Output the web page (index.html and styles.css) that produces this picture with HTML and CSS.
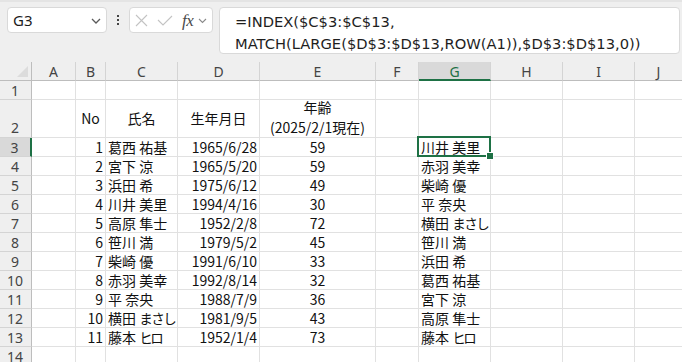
FILE: index.html
```html
<!DOCTYPE html>
<html lang="ja">
<head>
<meta charset="utf-8">
<link rel="stylesheet" href="styles.css">
</head>
<body>
<div class="app">
  <div class="fbar">
    <div class="namebox">
      <span class="nb-text">G3</span>
      <svg class="nb-chev" width="10" height="6" viewBox="0 0 10 6"><path d="M1 1 L5 5 L9 1" fill="none" stroke="#5a5a5a" stroke-width="1.3"/></svg>
    </div>
    <div class="dots"><i></i><i></i><i></i></div>
    <div class="fxbox">
      <svg class="ic" width="13" height="13" viewBox="0 0 13 13"><path d="M1 1 L12 12 M12 1 L1 12" stroke="#c3c3c3" stroke-width="1.1" fill="none"/></svg>
      <svg class="ic ic-check" width="16" height="11" viewBox="0 0 16 11"><path d="M1 5 L6 10 L15 1" stroke="#c3c3c3" stroke-width="1.1" fill="none"/></svg>
      <span class="fx">fx</span>
      <svg class="fx-chev" width="9" height="6" viewBox="0 0 9 6"><path d="M1 1 L4.5 4.5 L8 1" fill="none" stroke="#8a8a8a" stroke-width="1.1"/></svg>
    </div>
    <div class="formula">=INDEX($C$3:$C$13,<br>MATCH(LARGE($D$3:$D$13,ROW(A1)),$D$3:$D$13,0))</div>
  </div>

  <div class="sheet">
    <!-- header row -->
    <div class="corner"><span class="tri"></span></div>
    <div class="ch">A</div><div class="ch">B</div><div class="ch">C</div><div class="ch">D</div><div class="ch">E</div><div class="ch">F</div><div class="ch ch-sel">G</div><div class="ch">H</div><div class="ch">I</div><div class="ch">J</div>

    <!-- row 1 -->
    <div class="rh">1</div>
    <div class="c"></div><div class="c"></div><div class="c"></div><div class="c"></div><div class="c"></div><div class="c"></div><div class="c"></div><div class="c"></div><div class="c"></div><div class="c"></div>

    <!-- row 2 -->
    <div class="rh rh-tall">2</div>
    <div class="c"></div><div class="c ctr mid">No</div><div class="c ctr mid">氏名</div><div class="c ctr mid">生年月日</div><div class="c ctr two">年齢<br>(2025/2/1現在)</div><div class="c"></div><div class="c"></div><div class="c"></div><div class="c"></div><div class="c"></div>

    <!-- row 3 -->
    <div class="rh rh-sel">3</div>
    <div class="c"></div><div class="c r">1</div><div class="c">葛西 祐基</div><div class="c r">1965/6/28</div><div class="c ctr">59</div><div class="c"></div><div class="c sel">川井 美里</div><div class="c"></div><div class="c"></div><div class="c"></div>

    <div class="rh">4</div>
    <div class="c"></div><div class="c r">2</div><div class="c">宮下 涼</div><div class="c r">1965/5/20</div><div class="c ctr">59</div><div class="c"></div><div class="c">赤羽 美幸</div><div class="c"></div><div class="c"></div><div class="c"></div>

    <div class="rh">5</div>
    <div class="c"></div><div class="c r">3</div><div class="c">浜田 希</div><div class="c r">1975/6/12</div><div class="c ctr">49</div><div class="c"></div><div class="c">柴崎 優</div><div class="c"></div><div class="c"></div><div class="c"></div>

    <div class="rh">6</div>
    <div class="c"></div><div class="c r">4</div><div class="c">川井 美里</div><div class="c r">1994/4/16</div><div class="c ctr">30</div><div class="c"></div><div class="c">平 奈央</div><div class="c"></div><div class="c"></div><div class="c"></div>

    <div class="rh">7</div>
    <div class="c"></div><div class="c r">5</div><div class="c">高原 隼士</div><div class="c r">1952/2/8</div><div class="c ctr">72</div><div class="c"></div><div class="c"><span>横田 <span class="kana">まさし</span></span></div><div class="c"></div><div class="c"></div><div class="c"></div>

    <div class="rh">8</div>
    <div class="c"></div><div class="c r">6</div><div class="c">笹川 満</div><div class="c r">1979/5/2</div><div class="c ctr">45</div><div class="c"></div><div class="c">笹川 満</div><div class="c"></div><div class="c"></div><div class="c"></div>

    <div class="rh">9</div>
    <div class="c"></div><div class="c r">7</div><div class="c">柴崎 優</div><div class="c r">1991/6/10</div><div class="c ctr">33</div><div class="c"></div><div class="c">浜田 希</div><div class="c"></div><div class="c"></div><div class="c"></div>

    <div class="rh">10</div>
    <div class="c"></div><div class="c r">8</div><div class="c">赤羽 美幸</div><div class="c r">1992/8/14</div><div class="c ctr">32</div><div class="c"></div><div class="c">葛西 祐基</div><div class="c"></div><div class="c"></div><div class="c"></div>

    <div class="rh">11</div>
    <div class="c"></div><div class="c r">9</div><div class="c">平 奈央</div><div class="c r">1988/7/9</div><div class="c ctr">36</div><div class="c"></div><div class="c">宮下 涼</div><div class="c"></div><div class="c"></div><div class="c"></div>

    <div class="rh">12</div>
    <div class="c"></div><div class="c r">10</div><div class="c"><span>横田 <span class="kana">まさし</span></span></div><div class="c r">1981/9/5</div><div class="c ctr">43</div><div class="c"></div><div class="c">高原 隼士</div><div class="c"></div><div class="c"></div><div class="c"></div>

    <div class="rh">13</div>
    <div class="c"></div><div class="c r">11</div><div class="c"><span>藤本 <span class="kana kana-n">ヒロ</span></span></div><div class="c r">1952/1/4</div><div class="c ctr">73</div><div class="c"></div><div class="c"><span>藤本 <span class="kana kana-n">ヒロ</span></span></div><div class="c"></div><div class="c"></div><div class="c"></div>

    <div class="rh">14</div>
    <div class="c"></div><div class="c"></div><div class="c"></div><div class="c"></div><div class="c"></div><div class="c"></div><div class="c"></div><div class="c"></div><div class="c"></div><div class="c"></div>
  </div>
</div>
</body>
</html>
```

FILE: styles.css
```css
* { box-sizing: border-box; }
html, body { margin: 0; padding: 0; }
body {
  width: 682px;
  height: 362px;
  overflow: hidden;
  background: #efefef;
  font-family: "Noto Sans CJK JP", sans-serif;
}
.app {
  border-top: 2px solid #e4e4e4;
}
.fbar {
  display: flex;
  align-items: flex-start;
  height: 60px;
  padding: 5px 0 0 7px;
}
.namebox {
  width: 100px;
  height: 26px;
  background: #fff;
  border: 1px solid #d9d9d9;
  border-radius: 4px;
  display: flex;
  align-items: center;
  justify-content: space-between;
  padding: 0 5px 0 5px;
}
.nb-text {
  font-family: "Noto Sans", sans-serif;
  font-size: 15px;
  color: #1c1c1c;
  line-height: 1;
}
.nb-chev { margin-top: 1px; }
.dots {
  width: 22px;
  height: 26px;
  display: flex;
  flex-direction: column;
  align-items: center;
  justify-content: center;
  gap: 2px;
}
.dots i {
  display: block;
  width: 2px;
  height: 2px;
  background: #444;
}
.fxbox {
  width: 84px;
  height: 26px;
  background: #fff;
  border: 1px solid #d9d9d9;
  border-radius: 4px;
  display: flex;
  align-items: center;
  padding-left: 5px;
}
.ic { flex: none; }
.ic-check { margin-left: 9px; }
.fx {
  margin-left: 9px;
  font-family: "Liberation Serif", serif;
  font-style: italic;
  font-size: 17px;
  color: #4a4a4a;
  line-height: 1;
  letter-spacing: -0.5px;
}
.fx-chev { margin-left: 5px; margin-top: 1px; }
.formula {
  margin-left: 6px;
  width: 461px;
  height: 47px;
  background: #fff;
  border: 1px solid #d9d9d9;
  border-radius: 4px;
  padding: 3px 0 0 15px;
  font-family: "DejaVu Sans", sans-serif;
  font-size: 14.7px;
  line-height: 22px;
  color: #1e1e1e;
  white-space: nowrap;
}

.sheet {
  display: grid;
  grid-template-columns: 32px 44px 30px 72px 82px 116px 43px 72px 72px 72px 48px;
  grid-template-rows: 19px 19px 38px repeat(11, 19px) 19px;
  background: #fff;
}
.corner {
  background: #efefef;
  border-right: 1px solid #bdbdbd;
  border-bottom: 1px solid #bdbdbd;
  position: relative;
}
.tri {
  position: absolute;
  right: 3px;
  bottom: 3px;
  width: 0;
  height: 0;
  border-left: 11px solid transparent;
  border-bottom: 11px solid #dcdcdc;
}
.ch {
  background: #efefef;
  border-right: 1px solid #d4d4d4;
  border-bottom: 1px solid #bdbdbd;
  display: flex;
  align-items: center;
  justify-content: center;
  font-family: "Noto Sans", sans-serif;
  font-size: 14px;
  color: #444;
  padding-top: 1px;
}
.ch-sel {
  background: #d9d9d9;
  border-bottom: 2px solid #1e7145;
  color: #1e7145;
}
.rh {
  background: #efefef;
  border-right: 1px solid #bdbdbd;
  border-bottom: 1px solid #d4d4d4;
  display: flex;
  align-items: center;
  justify-content: center;
  font-family: "Noto Sans", sans-serif;
  font-size: 14px;
  color: #444;
  padding-right: 1px;
}
.rh-tall { align-items: flex-end; }
.rh-sel {
  background: #d9d9d9;
  border-right: 2px solid #1e7145;
}
.c {
  border-right: 1px solid #e1e1e1;
  border-bottom: 1px solid #e1e1e1;
  display: flex;
  align-items: flex-end;
  padding: 0 2px 0 2px;
  font-size: 14px;
  line-height: 18px;
  color: #111;
  white-space: nowrap;
  overflow: visible;
}
.r { justify-content: flex-end; }
.ctr { justify-content: center; text-align: center; }
.mid { align-items: center; padding-bottom: 1px; }
.two { line-height: 20px; }
.kana { font-size: 13.5px; letter-spacing: -1.5px; }
.kana-n { letter-spacing: -2.5px; }
.sel { position: relative; }
.sel::before {
  content: "";
  position: absolute;
  left: -2px;
  top: -2px;
  right: -1px;
  bottom: -1px;
  border: 2px solid #1e7145;
}
.sel::after {
  content: "";
  position: absolute;
  right: -4px;
  bottom: -4px;
  width: 6px;
  height: 6px;
  background: #1e7145;
  border: 1px solid #fff;
}
```
